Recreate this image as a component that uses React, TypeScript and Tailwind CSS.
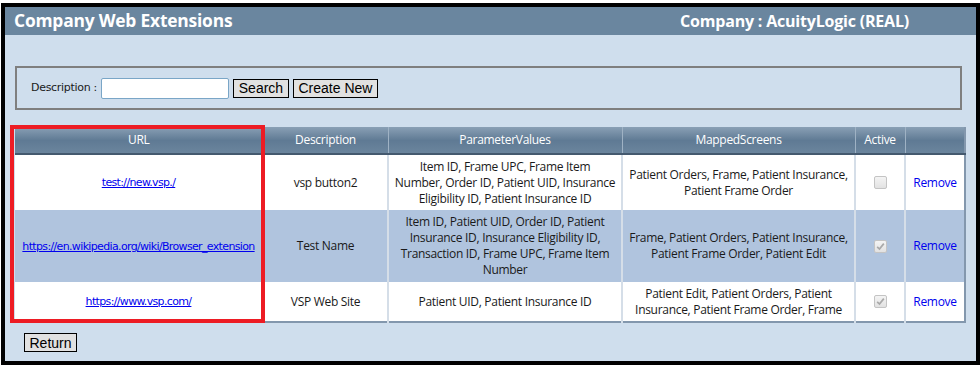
import React from "react";

const seg = { fontFamily: '"Open Sans", "Noto Sans", sans-serif' };
const tah = { fontFamily: '"DejaVu Sans", Verdana, sans-serif' };
const ari = { fontFamily: '"Liberation Sans", Arial, sans-serif' };

type Row = {
  url: string;
  desc: string;
  params: string[];
  screens: string[];
  active: boolean;
  alt: boolean;
  h: string;
};

const rows: Row[] = [
  {
    url: "test://new.vsp./",
    desc: "vsp button2",
    params: ["Item ID, Frame UPC, Frame Item", "Number, Order ID, Patient UID, Insurance", "Eligibility ID, Patient Insurance ID"],
    screens: ["Patient Orders, Frame, Patient Insurance,", "Patient Frame Order"],
    active: false,
    alt: false,
    h: "h-[56px]",
  },
  {
    url: "https://en.wikipedia.org/wiki/Browser_extension",
    desc: "Test Name",
    params: ["Item ID, Patient UID, Order ID, Patient", "Insurance ID, Insurance Eligibility ID,", "Transaction ID, Frame UPC, Frame Item", "Number"],
    screens: ["Frame, Patient Orders, Patient Insurance,", "Patient Frame Order, Patient Edit"],
    active: true,
    alt: true,
    h: "h-[72px]",
  },
  {
    url: "https://www.vsp.com/",
    desc: "VSP Web Site",
    params: ["Patient UID, Patient Insurance ID"],
    screens: ["Patient Edit, Patient Orders, Patient", "Insurance, Patient Frame Order, Frame"],
    active: true,
    alt: false,
    h: "h-[40px]",
  },
];

function Check({ checked }: { checked: boolean }) {
  return (
    <div className="mx-auto w-[13px] h-[13px] rounded-[2px] border border-[#c4c4c4] bg-gradient-to-b from-[#f4f4f4] to-[#e2e2e2] flex items-center justify-center">
      {checked && (
        <svg width="9" height="9" viewBox="0 0 9 9">
          <path d="M1.2 4.8 L3.5 7 L7.8 1.6" stroke="#a9a9a9" strokeWidth="1.7" fill="none" />
        </svg>
      )}
    </div>
  );
}

function Lines({ lines }: { lines: string[] }) {
  return (
    <>
      {lines.map((l, i) => (
        <div key={i} className="whitespace-nowrap">
          {l}
        </div>
      ))}
    </>
  );
}

export default function App() {
  return (
    <div className="w-[980px] h-[371px] bg-white pt-[3px] pl-[1px]">
      <div className="w-[979px] h-[362px] border-4 border-black bg-[#cfdeed] flex flex-col overflow-hidden">
        <div className="shrink-0 h-[28px] bg-[#6a869f] flex items-center justify-between pl-[9px] pr-[67px] text-white font-bold" style={seg}>
          <span className="text-[17.4px] leading-none tracking-[-0.2px]">Company Web Extensions</span>
          <span className="text-[16px] leading-none tracking-[-0.2px]">Company : AcuityLogic (REAL)</span>
        </div>
        <div className="shrink-0 ml-[10px] mt-[31px] w-[947px] h-[44px] border-2 border-[#7f7f7f] flex items-center pl-[14px]">
          <span className="text-[11px] text-[#1a1a1a] mr-[4px] tracking-[-0.3px]" style={tah}>Description :</span>
          <div className="w-[128px] h-[21px] rounded-[2px] border border-[#7aa6c7] bg-white" />
          <button className="ml-[4px] w-[56px] h-[19px] border border-black bg-[#e1e1e1] text-[14px] leading-none text-black" style={ari}>Search</button>
          <button className="ml-[4px] w-[85px] h-[19px] border border-black bg-[#e1e1e1] text-[14px] leading-none text-black" style={ari}>Create New</button>
        </div>
        <div className="shrink-0 relative ml-[10px] mt-[17px] w-[950px]">
          <table className="w-[950px] border-collapse table-fixed border-r-2 border-b-2 border-[#8397ad]" style={seg}>
            <colgroup>
              <col className="w-[248px]" />
              <col className="w-[125px]" />
              <col className="w-[234px]" />
              <col className="w-[233px]" />
              <col className="w-[50px]" />
              <col className="w-[60px]" />
            </colgroup>
            <thead>
              <tr className="h-[27px] bg-gradient-to-b from-[#8aa0b5] via-[#5f7a94] to-[#6c869e] text-white text-[12px] tracking-[-0.3px]">
                {["URL", "Description", "ParameterValues", "MappedScreens", "Active", ""].map((h, i) => (
                  <th key={i} className="font-normal border-l border-[#9fb2c4] border-b-2 border-b-[#44596e] first:border-l-0 px-1 leading-none">
                    {h}
                  </th>
                ))}
              </tr>
            </thead>
            <tbody className="text-[12px] text-[#1a1a1a] leading-[16px] tracking-[-0.3px]">
              {rows.map((r, i) => (
                <tr key={i} className={`${r.h} ${r.alt ? "bg-[#b0c4de]" : "bg-white"}`}>
                  <td className="text-center px-1 border-l-0">
                    <a className="text-[11px] text-[#0000ee] underline tracking-[-0.65px]" style={tah}>{r.url}</a>
                  </td>
                  <td className="text-center px-1 border-l-2 border-[#d5dee8]">{r.desc}</td>
                  <td className="text-center px-0 border-l-2 border-[#d5dee8]"><Lines lines={r.params} /></td>
                  <td className="text-center px-0 border-l-2 border-[#d5dee8]"><Lines lines={r.screens} /></td>
                  <td className="text-center border-l-2 border-[#d5dee8]"><Check checked={r.active} /></td>
                  <td className="text-center border-l-2 border-[#d5dee8]">
                    <a className="text-[#0000ee]">Remove</a>
                  </td>
                </tr>
              ))}
            </tbody>
          </table>
          <div className="absolute left-[-5px] top-[-2px] w-[255px] h-[198px] border-[4px] border-[#ed1c24] pointer-events-none" />
        </div>
        <div className="shrink-0 flex ml-[19px] mt-[10px]">
          <button className="w-[53px] h-[19px] border border-black bg-[#e1e1e1] text-[14px] leading-none text-black" style={ari}>Return</button>
        </div>
      </div>
    </div>
  );
}
